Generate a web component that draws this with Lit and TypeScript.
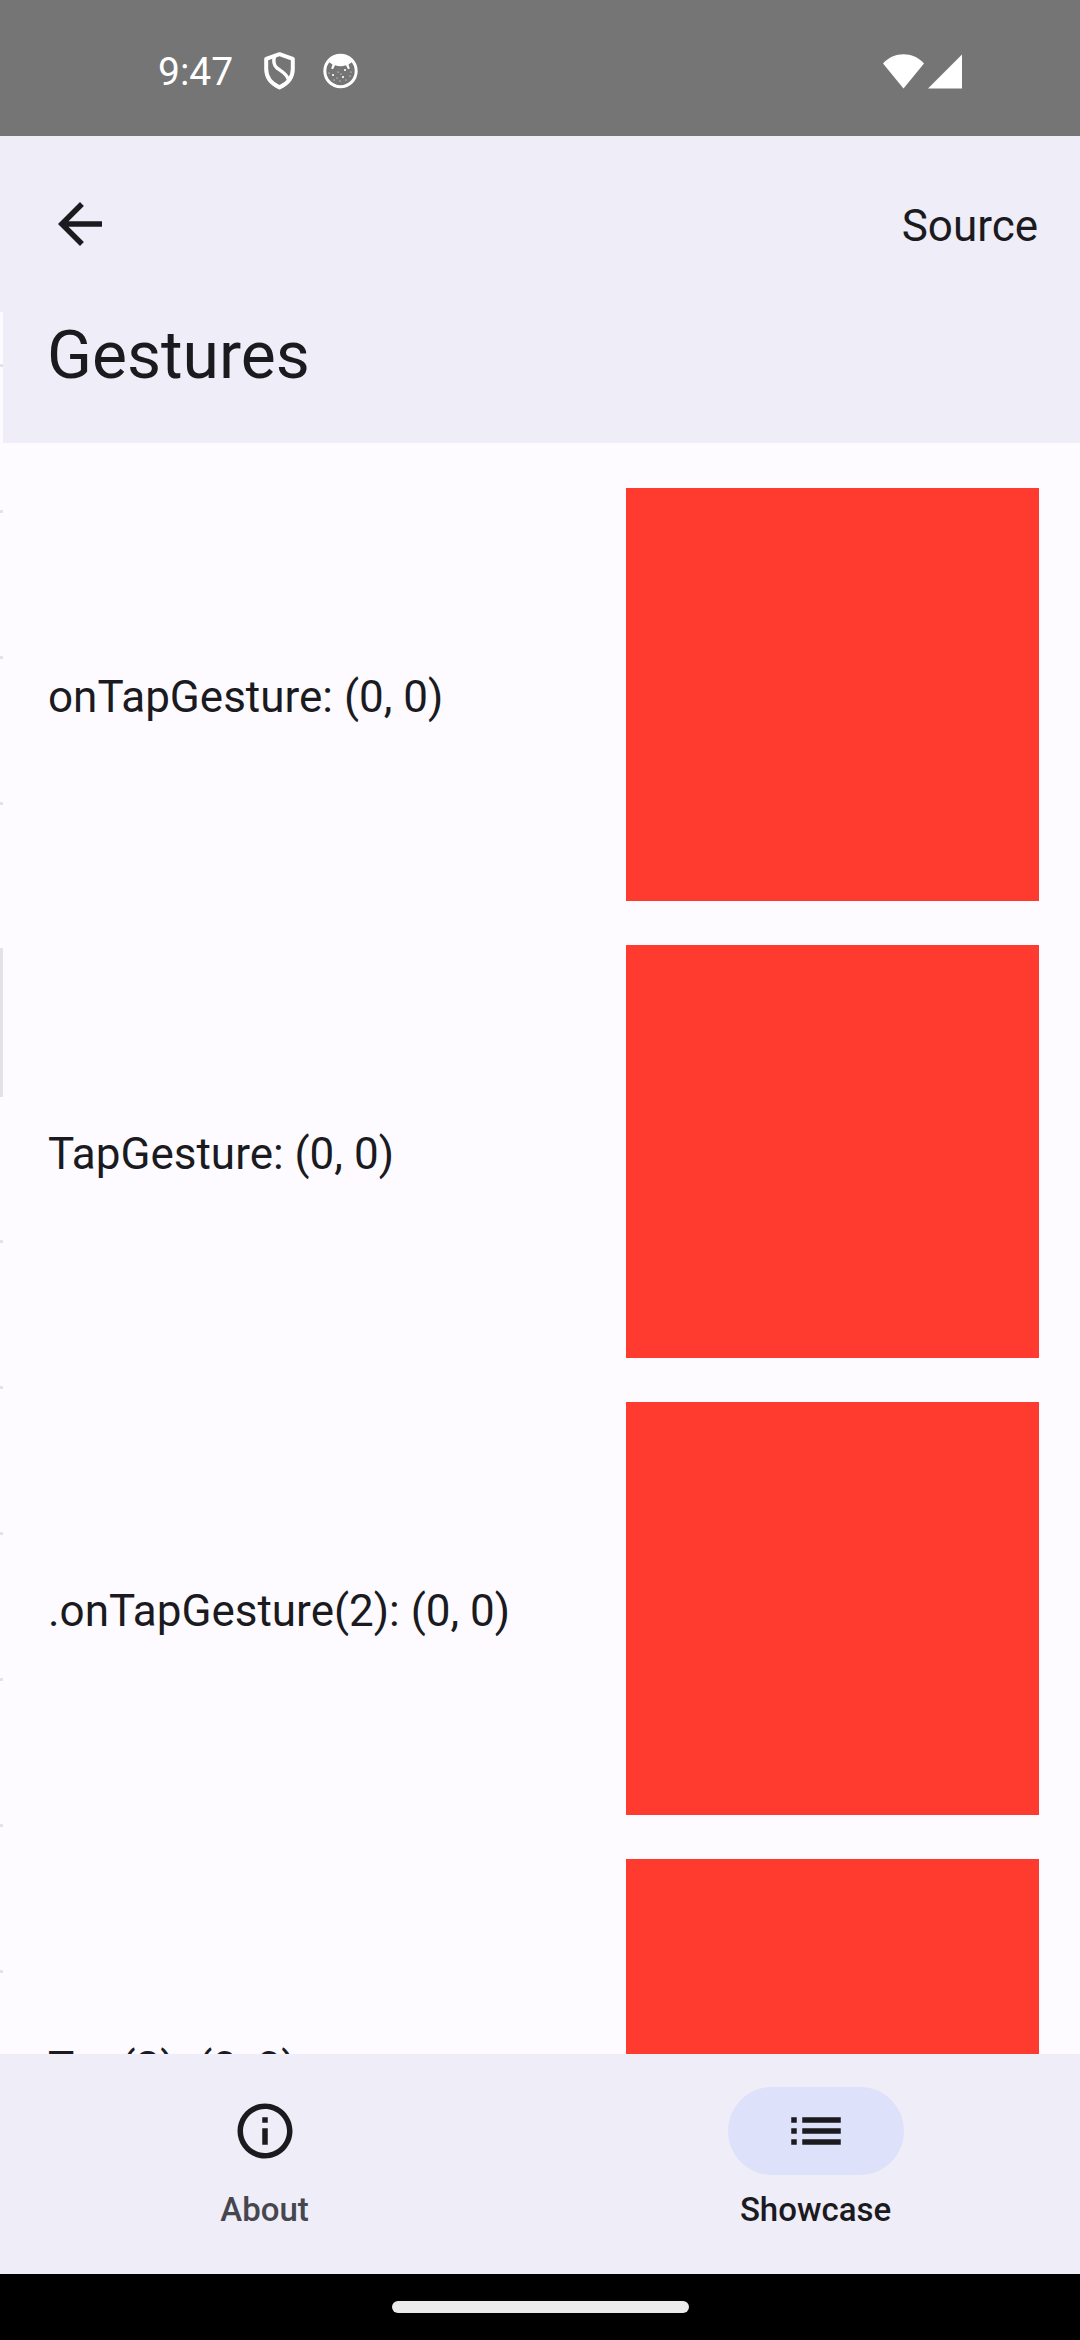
import { LitElement, html, css, svg } from "lit";
import { customElement, property, state } from "lit/decorators.js";
import { classMap } from "lit/directives/class-map.js";

const shieldIcon = svg`
  <svg width="31" height="38" viewBox="0 0 31 38" aria-hidden="true" fill="none" stroke="#fff" stroke-linejoin="round">
    <path stroke-width="4" d="M15.5 2.200 L2.200 6.800 V17 C2.200 26 8 32 15.5 35.400 C23 32 28.800 26 28.800 17 V6.800 Z"/>
    <path stroke-width="3.400" d="M10.500 4.500 C9.500 8 9.500 12.500 12.500 15.500 C15.500 18.500 23 21 24.500 28"/>
  </svg>`;

const faceIcon = svg`
  <svg width="35" height="36" viewBox="0 0 35 36" aria-hidden="true">
    <circle cx="17.500" cy="18" r="15.700" fill="none" stroke="#fff" stroke-width="3"/>
    <path fill="#fff" d="M5.500 7.500 C11 1 24 1 29.500 7.500 L28.500 9.500 L25.500 11.500 L26.800 15.500 L25 16.200 L23 12.200 Q17.500 14.500 12 12.200 L10 16.200 L8.200 15.500 L9.500 11.500 L6.500 9.500 Z"/>
    <g fill="#fff">
      <circle cx="22" cy="17" r="1.100"/><circle cx="10" cy="22" r="1.100"/>
      <circle cx="20" cy="24" r="1.100"/><circle cx="15" cy="19" r=".6"/>
      <circle cx="6" cy="20" r=".6"/><circle cx="28" cy="19" r=".6"/>
      <circle cx="27" cy="23" r=".6"/><circle cx="14" cy="25" r=".6"/>
      <circle cx="17" cy="28" r=".6"/><circle cx="23" cy="27" r=".6"/>
      <circle cx="11" cy="27" r=".6"/><circle cx="18" cy="21" r=".6"/>
    </g>
  </svg>`;

const wifiIcon = svg`
  <svg width="41" height="35" viewBox="0 0 41 35" aria-hidden="true">
    <path fill="#fff" d="M0 9.500 C11 -2.800 30 -2.800 41 9.500 L20.500 34.500 Z"/>
  </svg>`;

const signalIcon = svg`
  <svg width="34" height="35" viewBox="0 0 34 35" aria-hidden="true">
    <path fill="#fff" d="M34 .5 V34.500 H0 Z"/>
  </svg>`;

const backIcon = svg`
  <svg width="66" height="66" viewBox="0 0 24 24" aria-hidden="true" fill="currentColor">
    <path d="M20 11H7.830l5.590-5.590L12 4l-8 8 8 8 1.410-1.410L7.830 13H20v-2z"/>
  </svg>`;

const infoIcon = svg`
  <svg width="66" height="66" viewBox="0 0 24 24" aria-hidden="true" fill="currentColor">
    <path d="M11 7h2v2h-2zm0 4h2v6h-2zm1-9C6.480 2 2 6.480 2 12s4.480 10 10 10 10-4.480 10-10S17.520 2 12 2zm0 18c-4.410 0-8-3.590-8-8s3.590-8 8-8 8 3.590 8 8-3.590 8-8 8z"/>
  </svg>`;

const listIcon = svg`
  <svg width="66" height="66" viewBox="0 0 24 24" aria-hidden="true" fill="currentColor">
    <path d="M3 13h2v-2H3v2zm0 4h2v-2H3v2zm0-8h2V7H3v2zm4 4h14v-2H7v2zm0 4h14v-2H7v2zM7 7v2h14V7H7z"/>
  </svg>`;

@customElement("status-bar")
export class StatusBar extends LitElement {
  static styles = css`
    :host {
      display: flex;
      flex: none;
      align-items: center;
      height: 136px;
      padding: 6px 118px 0 158px;
      box-sizing: border-box;
      background: #757575;
      color: #fff;
    }
    .time {
      font-size: 39px;
      line-height: 46px;
      margin-right: 31px;
      padding-top: 2px;
    }
    .left,
    .right {
      display: flex;
      align-items: center;
    }
    .left {
      flex: 1;
      gap: 28px;
    }
    .right {
      gap: 4px;
    }
    svg {
      display: block;
    }
  `;

  render() {
    return html`
      <div class="time">9:47</div>
      <div class="left">${shieldIcon}${faceIcon}</div>
      <div class="right">${wifiIcon}${signalIcon}</div>
    `;
  }
}

@customElement("gesture-row")
export class GestureRow extends LitElement {
  @property() label = "";
  @state() private x = 0;
  @state() private y = 0;

  static styles = css`
    :host {
      display: flex;
      flex: none;
      align-items: center;
      justify-content: space-between;
    }
    .label {
      font-size: 44px;
      line-height: 66px;
      padding-top: 4px;
    }
    .target {
      flex: none;
      width: 413px;
      height: 413px;
      padding: 0;
      border: 0;
      background: #ff3b30;
    }
  `;

  private onTap(e: MouseEvent) {
    this.x = Math.round(e.offsetX);
    this.y = Math.round(e.offsetY);
  }

  render() {
    return html`
      <span class="label" id="label">${this.label}: (${this.x}, ${this.y})</span>
      <button class="target" aria-labelledby="label" @click=${this.onTap}></button>
    `;
  }
}

@customElement("app-root")
export class AppRoot extends LitElement {
  @state() private tab = "Showcase";

  private gestures = ["onTapGesture", "TapGesture", ".onTapGesture(2)", "Tap(2)"];
  private tabs = [
    { name: "About", icon: infoIcon },
    { name: "Showcase", icon: listIcon },
  ];
  private peekRows = Array.from({ length: 13 }, (_, i) => i);

  static styles = css`
    :host {
      display: flex;
      flex-direction: column;
      height: 100vh;
      overflow: hidden;
      background: #fdfbff;
      color: #1b1b1f;
      font-family: Roboto, "Liberation Sans", sans-serif;
    }
    .bar {
      display: flex;
      flex: none;
      align-items: center;
      justify-content: space-between;
      height: 176px;
      padding: 0 42px 0 47px;
      background: #efedf7;
    }
    .back,
    .source,
    .tab {
      padding: 0;
      border: 0;
      background: none;
      color: inherit;
      font: inherit;
    }
    svg {
      display: block;
    }
    .source {
      font-size: 44px;
      line-height: 66px;
      padding-top: 4px;
    }
    .body {
      display: flex;
      flex: 1;
      min-height: 0;
    }
    /* Edge of the previous screen, still visible beside this one. */
    .peek {
      flex: none;
      width: 3px;
      overflow: hidden;
    }
    .peek-row {
      height: 143px;
      border-bottom: 3px solid #e2e1ec;
    }
    .peek-row:first-child {
      height: 52px;
    }
    .peek-row.pressed {
      background: #e4e2e6;
    }
    .page {
      display: flex;
      flex: 1;
      flex-direction: column;
      min-width: 0;
    }
    .title {
      flex: none;
      margin: 0;
      padding: 0 42px 43px 44px;
      background: #efedf7;
      font-size: 66px;
      line-height: 88px;
      font-weight: 400;
    }
    .list {
      display: flex;
      flex: 1;
      flex-direction: column;
      gap: 44px;
      min-height: 0;
      padding: 45px 41px 0 45px;
      overflow: hidden;
    }
    .tabs {
      display: flex;
      flex: none;
      gap: 22px;
      height: 220px;
      background: #efedf7;
    }
    .tab {
      display: flex;
      flex: 1;
      flex-direction: column;
      align-items: center;
      gap: 13px;
      padding-top: 33px;
    }
    .pill {
      display: flex;
      align-items: center;
      justify-content: center;
      width: 176px;
      height: 88px;
      border-radius: 44px;
    }
    .tab-label {
      color: #46464f;
      font-size: 33px;
      line-height: 44px;
      font-weight: 500;
    }
    .selected .pill {
      background: #dde1f9;
    }
    .selected .tab-label {
      color: #1b1b1f;
    }
    .system {
      display: flex;
      flex: none;
      align-items: center;
      justify-content: center;
      height: 66px;
      background: #000;
    }
    .handle {
      width: 297px;
      height: 12px;
      border-radius: 6px;
      background: #ebebeb;
    }
  `;

  render() {
    return html`
      <status-bar></status-bar>
      <header class="bar">
        <button class="back" aria-label="Back">${backIcon}</button>
        <button class="source">Source</button>
      </header>
      <div class="body">
        <div class="peek" aria-hidden="true">
          ${this.peekRows.map(
            (i) => html`<div class=${classMap({ "peek-row": true, pressed: i === 5 })}></div>`
          )}
        </div>
        <main class="page">
          <h1 class="title">Gestures</h1>
          <div class="list">
            ${this.gestures.map((g) => html`<gesture-row .label=${g}></gesture-row>`)}
          </div>
        </main>
      </div>
      <nav class="tabs">
        ${this.tabs.map(
          (t) => html`
            <button
              class=${classMap({ tab: true, selected: this.tab === t.name })}
              @click=${() => (this.tab = t.name)}
            >
              <span class="pill">${t.icon}</span>
              <span class="tab-label">${t.name}</span>
            </button>
          `
        )}
      </nav>
      <div class="system"><div class="handle"></div></div>
    `;
  }
}
